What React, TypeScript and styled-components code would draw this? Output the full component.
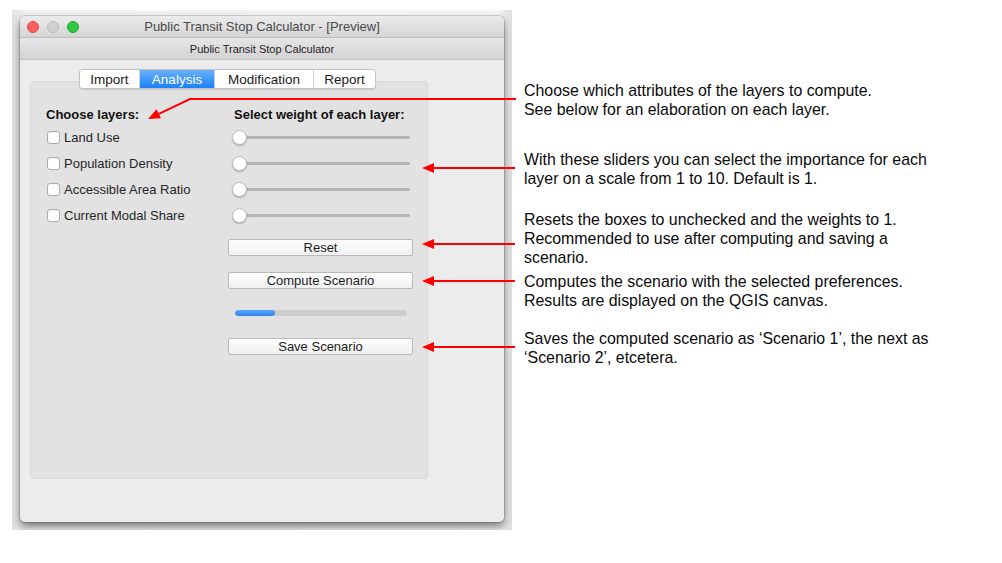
import React from "react";
import styled, { createGlobalStyle } from "styled-components";

const Global = createGlobalStyle`
  html, body { margin: 0; padding: 0; background: #ffffff; }
  body { font-family: "Liberation Sans", Arial, sans-serif; }
  * { box-sizing: border-box; }
`;

const Page = styled.div`
  position: relative;
  width: 1002px;
  height: 563px;
  display: flex;
  align-items: flex-start;
  background: #ffffff;
  overflow: hidden;
`;

const Frame = styled.div`
  margin: 10px 0 0 12px;
  width: 500px;
  height: 520px;
  padding: 6px 8px 0 8px;
  background: linear-gradient(to right, #e2e2e2 0%, #f2f2f2 3%, #f5f5f5 97%, #e0e0e0 100%);
  overflow: hidden;
  flex: none;
`;

const Window = styled.div`
  width: 484px;
  height: 506px;
  border-radius: 5px;
  background: #ececec;
  display: flex;
  flex-direction: column;
  overflow: hidden;
  box-shadow: 0 0 0 1px rgba(0, 0, 0, 0.14), 0 5px 9px rgba(0, 0, 0, 0.5);
`;

const TitleBar = styled.div`
  position: relative;
  height: 22px;
  flex: none;
  display: flex;
  align-items: center;
  justify-content: center;
  background: linear-gradient(#ebebeb, #d5d5d5);
  border-bottom: 1px solid #bdbdbd;
  font-size: 13px;
  color: #4a4a4a;
`;

const Lights = styled.div`
  position: absolute;
  left: 7px;
  top: 5px;
  display: flex;
  gap: 8px;
`;

const Light = styled.span<{ $c: string; $b: string }>`
  width: 12px;
  height: 12px;
  border-radius: 50%;
  background: ${(p) => p.$c};
  border: 0.5px solid ${(p) => p.$b};
`;

const SubBar = styled.div`
  height: 22px;
  flex: none;
  display: flex;
  align-items: center;
  justify-content: center;
  background: linear-gradient(#e6e6e6, #d3d3d3);
  border-bottom: 1px solid #c4c4c4;
  font-size: 11px;
  color: #1e1e1e;
`;

const Content = styled.div`
  flex: 1;
  padding: 10px 0 0 10px;
  display: flex;
  flex-direction: column;
  align-items: flex-start;
`;

const TabsArea = styled.div`
  width: 398px;
  display: flex;
  flex-direction: column;
  align-items: center;
`;

const TabBar = styled.div`
  display: flex;
  height: 20px;
  margin: -1px 3px -8px 0;
  position: relative;
  z-index: 1;
  border: 1px solid #c3c3c3;
  border-radius: 4px;
  background: #ffffff;
  box-shadow: 0 0.5px 1px rgba(0, 0, 0, 0.12);
  overflow: hidden;
`;

const Tab = styled.div<{ $w: number; $active?: boolean; $last?: boolean }>`
  width: ${(p) => p.$w}px;
  display: flex;
  align-items: center;
  justify-content: center;
  font-size: 13.5px;
  color: ${(p) => (p.$active ? "#ffffff" : "#1a1a1a")};
  background: ${(p) => (p.$active ? "linear-gradient(#69b1fa, #1b81fb)" : "#ffffff")};
  border-right: ${(p) => (p.$last ? "none" : "1px solid #d0d0d0")};
`;

const Panel = styled.div`
  width: 398px;
  height: 398px;
  background: #e2e2e2;
  border: 1px solid #d9d9d9;
  border-radius: 4px;
  padding: 25px 14px 0 15px;
  display: grid;
  grid-template-columns: 182px 185px;
  align-items: start;
`;

const Column = styled.div`
  display: flex;
  flex-direction: column;
`;

const Heading = styled.div<{ $indent?: number; $gap: number }>`
  height: 16px;
  line-height: 16px;
  font-size: 13px;
  font-weight: bold;
  color: #111;
  padding-left: ${(p) => p.$indent ?? 0}px;
  margin-bottom: ${(p) => p.$gap}px;
`;

const CheckRow = styled.label`
  height: 26px;
  display: flex;
  align-items: center;
  gap: 4px;
  padding-left: 1px;
  font-size: 13px;
  color: #262626;
`;

const Box = styled.span`
  width: 13px;
  height: 13px;
  border-radius: 3px;
  background: #ffffff;
  border: 1px solid #acacac;
  box-shadow: inset 0 1px 0 rgba(0, 0, 0, 0.04);
`;

const SliderRow = styled.div`
  height: 26px;
  display: flex;
  align-items: center;
  padding-left: 4px;
`;

const Thumb = styled.span`
  position: relative;
  z-index: 1;
  width: 15px;
  height: 15px;
  border-radius: 50%;
  background: #ffffff;
  border: 0.5px solid #bcbcbc;
  box-shadow: 0 1px 1.5px rgba(0, 0, 0, 0.25);
  flex: none;
`;

const Rail = styled.span`
  width: 171px;
  height: 3px;
  margin-left: -8px;
  border-radius: 2px;
  background: #b5b5b5;
`;

const Button = styled.div<{ $top: number }>`
  margin-top: ${(p) => p.$top}px;
  height: 17px;
  width: 185px;
  display: flex;
  align-items: center;
  justify-content: center;
  font-size: 13px;
  color: #1c1c1c;
  background: linear-gradient(#fdfdfd, #f0f0f0);
  border: 1px solid #b9b9b9;
  border-radius: 2px;
`;

const Progress = styled.div`
  margin: 21px 0 0 7px;
  width: 172px;
  height: 6px;
  border-radius: 3px;
  background: #cdcdcd;
  overflow: hidden;
`;

const ProgressFill = styled.div<{ $value: number }>`
  width: ${(p) => p.$value}%;
  height: 100%;
  border-radius: 3px;
  background: linear-gradient(#5aa5f7, #2d85ee);
`;

const Notes = styled.div`
  margin-left: 12px;
  padding-top: 81px;
  display: flex;
  flex-direction: column;
`;

const Note = styled.p<{ $top: number }>`
  margin: ${(p) => p.$top}px 0 0 0;
  font-size: 15.9px;
  line-height: 19px;
  color: #0a0a0a;
  font-family: "Liberation Sans", Arial, sans-serif;
  white-space: nowrap;
`;

const Overlay = styled.svg`
  position: absolute;
  left: 0;
  top: 0;
  pointer-events: none;
`;

const layers = ["Land Use", "Population Density", "Accessible Area Ratio", "Current Modal Share"];
const tabs = [
  { label: "Import", w: 60 },
  { label: "Analysis", w: 75, active: true },
  { label: "Modification", w: 99 },
  { label: "Report", w: 61 },
];

const HArrow = ({ y }: { y: number }) => (
  <g>
    <line x1={432} y1={y} x2={515} y2={y} stroke="#ff0000" strokeWidth={2} />
    <polygon points={`422,${y} 434,${y - 5} 434,${y + 5}`} fill="#ff0000" />
  </g>
);

export default function App() {
  return (
    <Page>
      <Global />
      <Frame>
        <Window>
          <TitleBar>
            <Lights>
              <Light $c="#fc605c" $b="#de4a45" />
              <Light $c="#d0d0d0" $b="#bcbcbc" />
              <Light $c="#2ec841" $b="#22a832" />
            </Lights>
            Public Transit Stop Calculator - [Preview]
          </TitleBar>
          <SubBar>Public Transit Stop Calculator</SubBar>
          <Content>
            <TabsArea>
              <TabBar>
                {tabs.map((t, i) => (
                  <Tab key={t.label} $w={t.w} $active={t.active} $last={i === tabs.length - 1}>
                    {t.label}
                  </Tab>
                ))}
              </TabBar>
              <Panel>
                <Column>
                  <Heading $gap={1}>Choose layers:</Heading>
                  {layers.map((l) => (
                    <CheckRow key={l}>
                      <Box />
                      {l}
                    </CheckRow>
                  ))}
                </Column>
                <Column>
                  <Heading $indent={6} $gap={1}>Select weight of each layer:</Heading>
                  {layers.map((l) => (
                    <SliderRow key={l}>
                      <Thumb />
                      <Rail />
                    </SliderRow>
                  ))}
                  <Button $top={11}>Reset</Button>
                  <Button $top={16}>Compute Scenario</Button>
                  <Progress>
                    <ProgressFill $value={23} />
                  </Progress>
                  <Button $top={22}>Save Scenario</Button>
                </Column>
              </Panel>
            </TabsArea>
          </Content>
        </Window>
      </Frame>
      <Notes>
        <Note $top={0}>
          Choose which attributes of the layers to compute.
          <br />
          See below for an elaboration on each layer.
        </Note>
        <Note $top={31}>
          With these sliders you can select the importance for each
          <br />
          layer on a scale from 1 to 10. Default is 1.
        </Note>
        <Note $top={22}>
          Resets the boxes to unchecked and the weights to 1.
          <br />
          Recommended to use after computing and saving a
          <br />
          scenario.
        </Note>
        <Note $top={5}>
          Computes the scenario with the selected preferences.
          <br />
          Results are displayed on the QGIS canvas.
        </Note>
        <Note $top={19}>
          Saves the computed scenario as ‘Scenario 1’, the next as
          <br />
          ‘Scenario 2’, etcetera.
        </Note>
      </Notes>
      <Overlay width={1002} height={563} viewBox="0 0 1002 563">
        <polyline points="516,99 190,99 158.8,113.8" fill="none" stroke="#ff0000" strokeWidth={2} />
        <polygon points="148,119 161,118.3 156.6,109.3" fill="#ff0000" />
        <HArrow y={168} />
        <HArrow y={244} />
        <HArrow y={281} />
        <HArrow y={347} />
      </Overlay>
    </Page>
  );
}
